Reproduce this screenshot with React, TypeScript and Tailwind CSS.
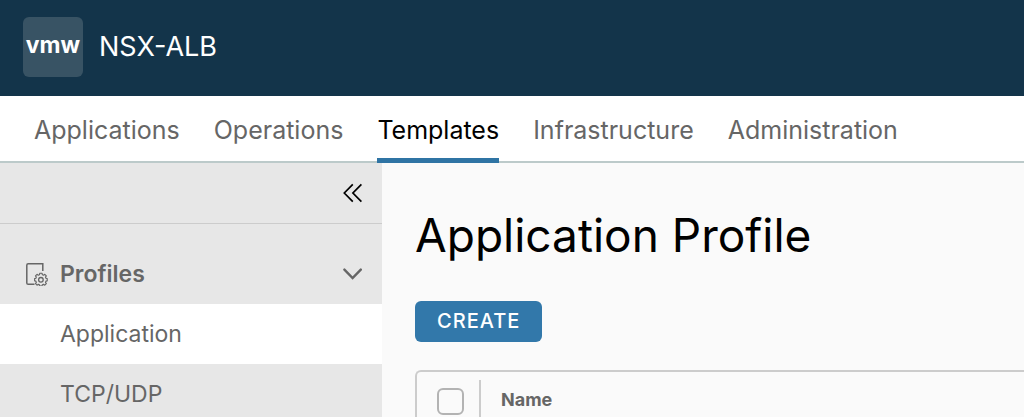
import React from "react";

const tabs = ["Applications", "Operations", "Templates", "Infrastructure", "Administration"];

function ProfileIcon() {
  return (
    <svg className="h-6 w-6 shrink-0" viewBox="0 0 24 24" fill="none" stroke="#666666" aria-hidden="true">
      <path d="M10.5 22.3H4.2a1.4 1.4 0 0 1-1.4-1.4V3.2a1.4 1.4 0 0 1 1.4-1.4h14.6V9" strokeWidth="1.5" />
      <path
        d="M15.7 10.4h2.4l.4 1.6 1.3.5 1.4-.9 1.7 1.7-.9 1.4.5 1.3 1.4.4v2.4l-1.4.4-.5 1.3.9 1.4-1.7 1.7-1.4-.9-1.3.5-.4 1.4h-2.4l-.4-1.4-1.3-.5-1.4.9-1.7-1.7.9-1.4-.5-1.3-1.4-.4v-2.4l1.4-.4.5-1.3-.9-1.4 1.7-1.7 1.4.9 1.3-.5z"
        strokeWidth="1.3"
        strokeLinejoin="round"
        transform="translate(1.7 1.9) scale(.9)"
      />
      <circle cx="16.9" cy="17.8" r="2.3" strokeWidth="1.3" />
    </svg>
  );
}

function CollapseIcon() {
  return (
    <svg className="h-5 w-5" viewBox="0 0 20 20" fill="none" stroke="#000000" strokeWidth="1.7" aria-hidden="true">
      <path d="M10.8 1.4 2.3 10l8.5 8.6M19.4 1.4 10.9 10l8.5 8.6" />
    </svg>
  );
}

function ChevronIcon() {
  return (
    <svg className="h-5 w-5" viewBox="0 0 20 20" fill="none" stroke="#666666" strokeWidth="2.4" aria-hidden="true">
      <path d="M2.4 5.6 10.6 14l8.2-8.4" strokeLinecap="round" />
    </svg>
  );
}

export default function App() {
  return (
    <div className="flex h-screen flex-col overflow-hidden bg-[#fafafa] font-['Inter',sans-serif] text-[#666666]">
      <header className="flex h-24 shrink-0 items-center gap-4 bg-[#13344a] px-[23px] pb-0.5 text-white">
        <span className="flex size-[60px] items-center justify-center rounded-md bg-[#385364] pb-1 text-[23px] font-bold">
          vmw
        </span>
        <span className="text-[27px] leading-8">NSX-ALB</span>
      </header>

      <nav className="h-[67px] shrink-0 border-b-2 border-[#bccaca] bg-white px-[34px]" aria-label="Main">
        <ul className="flex gap-[34px]">
          {tabs.map((tab) => (
            <li key={tab}>
              <a
                href="#"
                aria-current={tab === "Templates" ? "page" : undefined}
                className={
                  tab === "Templates"
                    ? "block h-[67px] border-b-5 border-[#2f74a4] pt-4 text-[25px] leading-9 text-black"
                    : "block h-[67px] pt-4 text-[25px] leading-9"
                }
              >
                {tab}
              </a>
            </li>
          ))}
        </ul>
      </nav>

      <div className="flex min-h-0 flex-1">
        <aside className="w-[382px] shrink-0 bg-[#e7e7e7]">
          <div className="flex h-[61px] items-center justify-end border-b border-[#cccccc] px-5">
            <button type="button" aria-label="Collapse sidebar">
              <CollapseIcon />
            </button>
          </div>
          <button type="button" aria-expanded="true" className="flex h-20 w-full items-center gap-3 px-5 pt-5 pl-6">
            <ProfileIcon />
            <span className="flex-1 text-left text-[23px] leading-8 font-semibold">Profiles</span>
            <ChevronIcon />
          </button>
          <ul className="text-[23px] leading-[60px]">
            <li>
              <a href="#" aria-current="page" className="block bg-white pl-[60px]">
                Application
              </a>
            </li>
            <li>
              <a href="#" className="block pl-[60px]">
                TCP/UDP
              </a>
            </li>
          </ul>
        </aside>

        <main className="min-w-0 flex-1 pt-[42px] pl-[33px]">
          <h1 className="text-[46px] leading-[60px] text-black">Application Profile</h1>
          <button
            type="button"
            className="mt-9 flex h-[41px] items-center rounded-md bg-[#3278aa] px-[22px] pb-0.5 text-xl font-medium tracking-wider text-white"
          >
            CREATE
          </button>
          <div className="mt-7 rounded-tl-md border-t-2 border-l-2 border-[#cccccc]">
            <table className="w-full">
              <thead>
                <tr>
                  <th className="w-16 pt-2">
                    <div className="flex h-15 border-r-2 border-[#cccccc] pt-2 pl-5">
                      <input
                        type="checkbox"
                        aria-label="Select all"
                        className="size-[27px] appearance-none rounded-md border-2 border-[#b3b3b3] bg-[#fafafa] checked:bg-[#3278aa]"
                      />
                    </div>
                  </th>
                  <th className="pt-3.5 pl-5 text-left align-top text-lg leading-7 font-bold">Name</th>
                </tr>
              </thead>
            </table>
          </div>
        </main>
      </div>
    </div>
  );
}
